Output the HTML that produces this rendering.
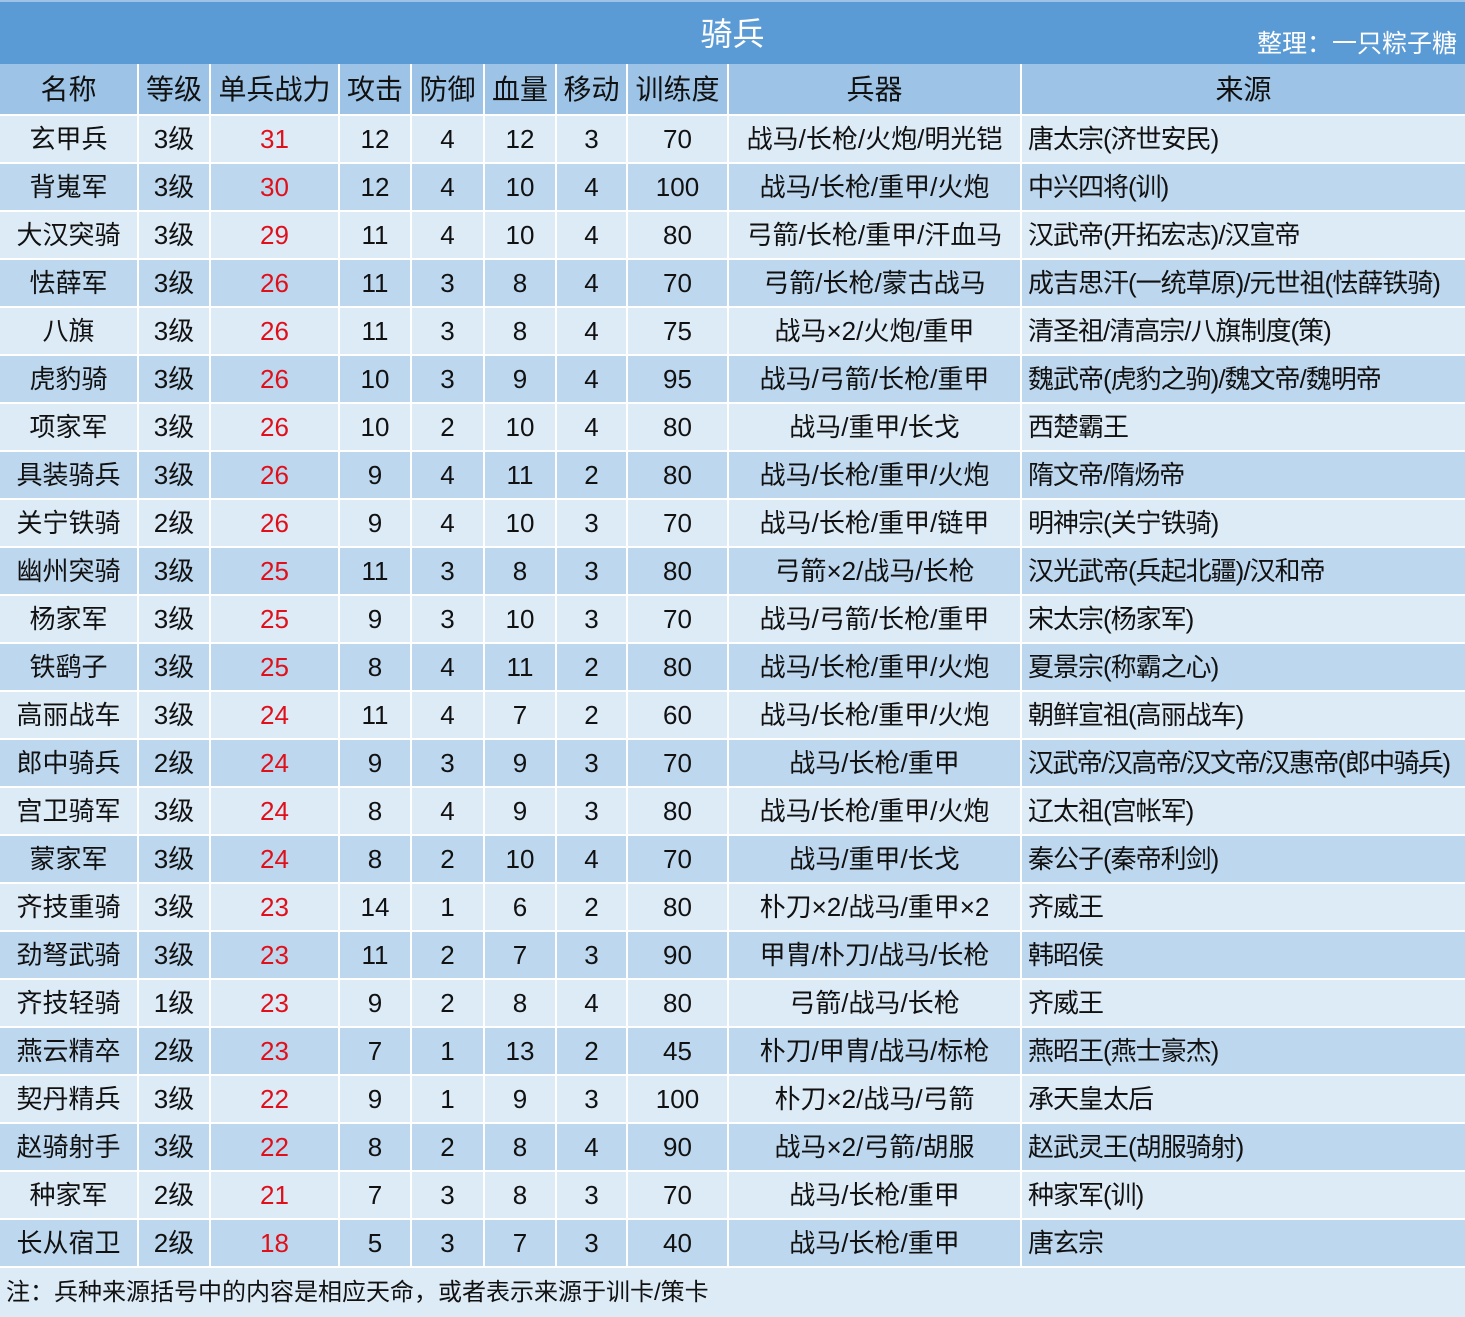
<!DOCTYPE html>
<html><head><meta charset="utf-8"><style>
*{margin:0;padding:0;box-sizing:border-box}
body{width:1465px;height:1317px;background:#ddebf7;font-family:"Liberation Sans","Noto Sans CJK SC",sans-serif;color:#111;overflow:hidden;position:relative}
.title{position:absolute;left:0;top:0;width:1465px;height:64px;background:#5b9bd5;border-top:2px solid #9dc3e6}
.title .t{position:absolute;left:0;width:1465px;top:12px;text-align:center;color:#fff;font-size:32px;line-height:40px}
.title .a{position:absolute;right:8px;top:26px;color:#fff;font-size:25px;line-height:32px}
.row{position:absolute;left:0;width:1465px;height:48px;display:flex;border-bottom:2px solid #fff}
.row div{height:100%;border-right:2px solid #fff;text-align:center;font-size:26px;line-height:46px;white-space:nowrap;overflow:hidden}
.row div:last-child{border-right:none;text-align:left;padding-left:6px;letter-spacing:-1px}
.hd{background:#9dc3e6;height:52px}
.hd div{line-height:52px;font-size:28px!important}
.hd div:last-child{text-align:center;padding-left:0;letter-spacing:0}
.o{background:#ddebf7}.e{background:#bdd7ee}
.r{color:#e0101a}
.c1{width:139px}.c2{width:72px}.c3{width:129px}.c4{width:72px}.c5{width:73px}.c6{width:72px}.c7{width:71px}.c8{width:101px}.c9{width:293px}.c10{width:443px}
.foot{position:absolute;left:6px;top:1276px;font-size:24px;line-height:34px}
</style></head><body>
<div class="title"><div class="t">骑兵</div><div class="a">整理：一只粽子糖</div></div>
<div class="row hd" style="top:64px"><div class="c1">名称</div><div class="c2">等级</div><div class="c3">单兵战力</div><div class="c4">攻击</div><div class="c5">防御</div><div class="c6">血量</div><div class="c7">移动</div><div class="c8">训练度</div><div class="c9">兵器</div><div class="c10">来源</div></div>
<div class="row o" style="top:116px"><div class="c1">玄甲兵</div><div class="c2">3级</div><div class="c3 r">31</div><div class="c4">12</div><div class="c5">4</div><div class="c6">12</div><div class="c7">3</div><div class="c8">70</div><div class="c9">战马/长枪/火炮/明光铠</div><div class="c10">唐太宗(济世安民)</div></div>
<div class="row e" style="top:164px"><div class="c1">背嵬军</div><div class="c2">3级</div><div class="c3 r">30</div><div class="c4">12</div><div class="c5">4</div><div class="c6">10</div><div class="c7">4</div><div class="c8">100</div><div class="c9">战马/长枪/重甲/火炮</div><div class="c10">中兴四将(训)</div></div>
<div class="row o" style="top:212px"><div class="c1">大汉突骑</div><div class="c2">3级</div><div class="c3 r">29</div><div class="c4">11</div><div class="c5">4</div><div class="c6">10</div><div class="c7">4</div><div class="c8">80</div><div class="c9">弓箭/长枪/重甲/汗血马</div><div class="c10">汉武帝(开拓宏志)/汉宣帝</div></div>
<div class="row e" style="top:260px"><div class="c1">怯薛军</div><div class="c2">3级</div><div class="c3 r">26</div><div class="c4">11</div><div class="c5">3</div><div class="c6">8</div><div class="c7">4</div><div class="c8">70</div><div class="c9">弓箭/长枪/蒙古战马</div><div class="c10">成吉思汗(一统草原)/元世祖(怯薛铁骑)</div></div>
<div class="row o" style="top:308px"><div class="c1">八旗</div><div class="c2">3级</div><div class="c3 r">26</div><div class="c4">11</div><div class="c5">3</div><div class="c6">8</div><div class="c7">4</div><div class="c8">75</div><div class="c9">战马×2/火炮/重甲</div><div class="c10">清圣祖/清高宗/八旗制度(策)</div></div>
<div class="row e" style="top:356px"><div class="c1">虎豹骑</div><div class="c2">3级</div><div class="c3 r">26</div><div class="c4">10</div><div class="c5">3</div><div class="c6">9</div><div class="c7">4</div><div class="c8">95</div><div class="c9">战马/弓箭/长枪/重甲</div><div class="c10">魏武帝(虎豹之驹)/魏文帝/魏明帝</div></div>
<div class="row o" style="top:404px"><div class="c1">项家军</div><div class="c2">3级</div><div class="c3 r">26</div><div class="c4">10</div><div class="c5">2</div><div class="c6">10</div><div class="c7">4</div><div class="c8">80</div><div class="c9">战马/重甲/长戈</div><div class="c10">西楚霸王</div></div>
<div class="row e" style="top:452px"><div class="c1">具装骑兵</div><div class="c2">3级</div><div class="c3 r">26</div><div class="c4">9</div><div class="c5">4</div><div class="c6">11</div><div class="c7">2</div><div class="c8">80</div><div class="c9">战马/长枪/重甲/火炮</div><div class="c10">隋文帝/隋炀帝</div></div>
<div class="row o" style="top:500px"><div class="c1">关宁铁骑</div><div class="c2">2级</div><div class="c3 r">26</div><div class="c4">9</div><div class="c5">4</div><div class="c6">10</div><div class="c7">3</div><div class="c8">70</div><div class="c9">战马/长枪/重甲/链甲</div><div class="c10">明神宗(关宁铁骑)</div></div>
<div class="row e" style="top:548px"><div class="c1">幽州突骑</div><div class="c2">3级</div><div class="c3 r">25</div><div class="c4">11</div><div class="c5">3</div><div class="c6">8</div><div class="c7">3</div><div class="c8">80</div><div class="c9">弓箭×2/战马/长枪</div><div class="c10">汉光武帝(兵起北疆)/汉和帝</div></div>
<div class="row o" style="top:596px"><div class="c1">杨家军</div><div class="c2">3级</div><div class="c3 r">25</div><div class="c4">9</div><div class="c5">3</div><div class="c6">10</div><div class="c7">3</div><div class="c8">70</div><div class="c9">战马/弓箭/长枪/重甲</div><div class="c10">宋太宗(杨家军)</div></div>
<div class="row e" style="top:644px"><div class="c1">铁鹞子</div><div class="c2">3级</div><div class="c3 r">25</div><div class="c4">8</div><div class="c5">4</div><div class="c6">11</div><div class="c7">2</div><div class="c8">80</div><div class="c9">战马/长枪/重甲/火炮</div><div class="c10">夏景宗(称霸之心)</div></div>
<div class="row o" style="top:692px"><div class="c1">高丽战车</div><div class="c2">3级</div><div class="c3 r">24</div><div class="c4">11</div><div class="c5">4</div><div class="c6">7</div><div class="c7">2</div><div class="c8">60</div><div class="c9">战马/长枪/重甲/火炮</div><div class="c10">朝鲜宣祖(高丽战车)</div></div>
<div class="row e" style="top:740px"><div class="c1">郎中骑兵</div><div class="c2">2级</div><div class="c3 r">24</div><div class="c4">9</div><div class="c5">3</div><div class="c6">9</div><div class="c7">3</div><div class="c8">70</div><div class="c9">战马/长枪/重甲</div><div class="c10" style="letter-spacing:-1.6px">汉武帝/汉高帝/汉文帝/汉惠帝(郎中骑兵)</div></div>
<div class="row o" style="top:788px"><div class="c1">宫卫骑军</div><div class="c2">3级</div><div class="c3 r">24</div><div class="c4">8</div><div class="c5">4</div><div class="c6">9</div><div class="c7">3</div><div class="c8">80</div><div class="c9">战马/长枪/重甲/火炮</div><div class="c10">辽太祖(宫帐军)</div></div>
<div class="row e" style="top:836px"><div class="c1">蒙家军</div><div class="c2">3级</div><div class="c3 r">24</div><div class="c4">8</div><div class="c5">2</div><div class="c6">10</div><div class="c7">4</div><div class="c8">70</div><div class="c9">战马/重甲/长戈</div><div class="c10">秦公子(秦帝利剑)</div></div>
<div class="row o" style="top:884px"><div class="c1">齐技重骑</div><div class="c2">3级</div><div class="c3 r">23</div><div class="c4">14</div><div class="c5">1</div><div class="c6">6</div><div class="c7">2</div><div class="c8">80</div><div class="c9">朴刀×2/战马/重甲×2</div><div class="c10">齐威王</div></div>
<div class="row e" style="top:932px"><div class="c1">劲弩武骑</div><div class="c2">3级</div><div class="c3 r">23</div><div class="c4">11</div><div class="c5">2</div><div class="c6">7</div><div class="c7">3</div><div class="c8">90</div><div class="c9">甲胄/朴刀/战马/长枪</div><div class="c10">韩昭侯</div></div>
<div class="row o" style="top:980px"><div class="c1">齐技轻骑</div><div class="c2">1级</div><div class="c3 r">23</div><div class="c4">9</div><div class="c5">2</div><div class="c6">8</div><div class="c7">4</div><div class="c8">80</div><div class="c9">弓箭/战马/长枪</div><div class="c10">齐威王</div></div>
<div class="row e" style="top:1028px"><div class="c1">燕云精卒</div><div class="c2">2级</div><div class="c3 r">23</div><div class="c4">7</div><div class="c5">1</div><div class="c6">13</div><div class="c7">2</div><div class="c8">45</div><div class="c9">朴刀/甲胄/战马/标枪</div><div class="c10">燕昭王(燕士豪杰)</div></div>
<div class="row o" style="top:1076px"><div class="c1">契丹精兵</div><div class="c2">3级</div><div class="c3 r">22</div><div class="c4">9</div><div class="c5">1</div><div class="c6">9</div><div class="c7">3</div><div class="c8">100</div><div class="c9">朴刀×2/战马/弓箭</div><div class="c10">承天皇太后</div></div>
<div class="row e" style="top:1124px"><div class="c1">赵骑射手</div><div class="c2">3级</div><div class="c3 r">22</div><div class="c4">8</div><div class="c5">2</div><div class="c6">8</div><div class="c7">4</div><div class="c8">90</div><div class="c9">战马×2/弓箭/胡服</div><div class="c10">赵武灵王(胡服骑射)</div></div>
<div class="row o" style="top:1172px"><div class="c1">种家军</div><div class="c2">2级</div><div class="c3 r">21</div><div class="c4">7</div><div class="c5">3</div><div class="c6">8</div><div class="c7">3</div><div class="c8">70</div><div class="c9">战马/长枪/重甲</div><div class="c10">种家军(训)</div></div>
<div class="row e" style="top:1220px"><div class="c1">长从宿卫</div><div class="c2">2级</div><div class="c3 r">18</div><div class="c4">5</div><div class="c5">3</div><div class="c6">7</div><div class="c7">3</div><div class="c8">40</div><div class="c9">战马/长枪/重甲</div><div class="c10">唐玄宗</div></div>
<div class="foot">注：兵种来源括号中的内容是相应天命，或者表示来源于训卡/策卡</div>
</body></html>
